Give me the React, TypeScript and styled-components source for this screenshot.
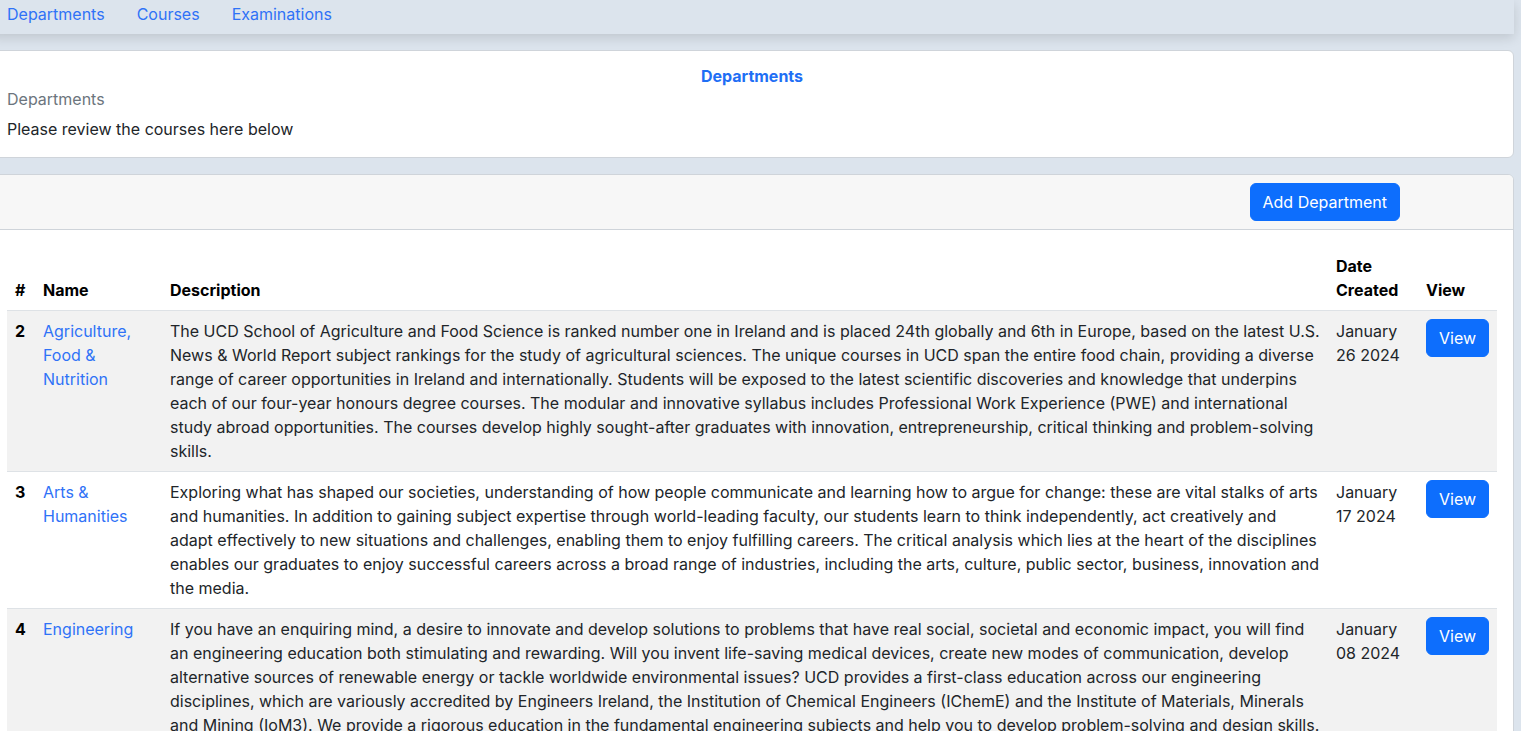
import React from "react";
import styled, { createGlobalStyle } from "styled-components";

const GlobalStyle = createGlobalStyle`
  html, body {
    margin: 0;
    padding: 0;
    background: #dce4ed;
    font-family: Inter, "Noto Sans", "Liberation Sans", sans-serif;
    font-size: 16px;
    line-height: 24px;
    color: #212529;
    overflow: hidden;
  }
  * { box-sizing: border-box; }
`;

const Page = styled.div`
  margin-left: -10px;
  width: 1524px;
  display: flex;
  flex-direction: column;
  gap: 16px;
`;

const NavBar = styled.nav`
  display: flex;
  gap: 32px;
  padding: 2px 17px 8px;
  background: #dce4ed;
  box-shadow: 0 4px 12px rgba(0, 0, 0, 0.13);
`;

const NavLink = styled.a`
  color: #2f72f7;
  text-decoration: none;
  font-size: 16px;
  line-height: 24px;
`;

const Card = styled.section`
  background: #fff;
  border: 1px solid #cfd4da;
  border-radius: 6px;
  overflow: hidden;
`;

const CardBody = styled.div`
  padding: 16px;
`;

const CardTitle = styled.h5`
  margin: 0 0 8px;
  font-size: 16px;
  font-weight: 700;
  line-height: 1.2;
  color: #1f6ff5;
  text-align: center;
`;

const CardSubtitle = styled.h6`
  margin: -4px 0 8px;
  font-size: 16px;
  font-weight: 400;
  line-height: 1.2;
  color: #6c757d;
`;

const CardText = styled.p`
  margin: 0;
`;

const CardHeader = styled.div`
  display: flex;
  justify-content: flex-end;
  padding: 8px 113px 8px 16px;
  background: #f7f7f7;
  border-bottom: 1px solid #cfd4da;
`;

const Button = styled.button`
  font-family: inherit;
  font-size: 16px;
  line-height: 24px;
  padding: 6px 12px;
  border: 1px solid #0d6efd;
  border-radius: 6px;
  background: #0d6efd;
  color: #fff;
  cursor: pointer;
`;

const Table = styled.table`
  width: 100%;
  border-collapse: collapse;
  table-layout: fixed;
`;

const HeadCell = styled.th`
  padding: 8px;
  text-align: left;
  vertical-align: bottom;
  font-weight: 700;
  color: #000;
  border-bottom: 1px solid #dee2e6;
`;

const Row = styled.tr<{ $striped: boolean }>`
  background: ${(p) => (p.$striped ? "#f2f2f2" : "#fff")};
  border-bottom: 1px solid #dee2e6;
`;

const NumCell = styled.th`
  padding: 8px;
  text-align: left;
  vertical-align: top;
  font-weight: 700;
  color: #000;
`;

const Cell = styled.td`
  padding: 8px;
  vertical-align: top;
`;

const NameLink = styled.a`
  color: #2f72f7;
  text-decoration: none;
`;

const rows = [
  {
    id: 2,
    name: "Agriculture, Food & Nutrition",
    desc: "The UCD School of Agriculture and Food Science is ranked number one in Ireland and is placed 24th globally and 6th in Europe, based on the latest U.S. News & World Report subject rankings for the study of agricultural sciences. The unique courses in UCD span the entire food chain, providing a diverse range of career opportunities in Ireland and internationally. Students will be exposed to the latest scientific discoveries and knowledge that underpins each of our four-year honours degree courses. The modular and innovative syllabus includes Professional Work Experience (PWE) and international study abroad opportunities. The courses develop highly sought-after graduates with innovation, entrepreneurship, critical thinking and problem-solving skills.",
    date: "January 26 2024",
  },
  {
    id: 3,
    name: "Arts & Humanities",
    desc: "Exploring what has shaped our societies, understanding of how people communicate and learning how to argue for change: these are vital stalks of arts and humanities. In addition to gaining subject expertise through world-leading faculty, our students learn to think independently, act creatively and adapt effectively to new situations and challenges, enabling them to enjoy fulfilling careers. The critical analysis which lies at the heart of the disciplines enables our graduates to enjoy successful careers across a broad range of industries, including the arts, culture, public sector, business, innovation and the media.",
    date: "January 17 2024",
  },
  {
    id: 4,
    name: "Engineering",
    desc: "If you have an enquiring mind, a desire to innovate and develop solutions to problems that have real social, societal and economic impact, you will find an engineering education both stimulating and rewarding. Will you invent life-saving medical devices, create new modes of communication, develop alternative sources of renewable energy or tackle worldwide environmental issues? UCD provides a first-class education across our engineering disciplines, which are variously accredited by Engineers Ireland, the Institution of Chemical Engineers (IChemE) and the Institute of Materials, Minerals and Mining (IoM3). We provide a rigorous education in the fundamental engineering subjects and help you to develop problem-solving and design skills. Our graduates go on to build successful careers in industry, research and public service across Ireland and around the world.",
    date: "January 08 2024",
  },
];

export default function App() {
  return (
    <>
      <GlobalStyle />
      <Page>
        <NavBar>
          <NavLink href="#">Departments</NavLink>
          <NavLink href="#">Courses</NavLink>
          <NavLink href="#">Examinations</NavLink>
        </NavBar>
        <Card>
          <CardBody>
            <CardTitle>Departments</CardTitle>
            <CardSubtitle>Departments</CardSubtitle>
            <CardText>Please review the courses here below</CardText>
          </CardBody>
        </Card>
        <Card>
          <CardHeader>
            <Button>Add Department</Button>
          </CardHeader>
          <CardBody>
            <Table>
              <colgroup>
                <col style={{ width: 28 }} />
                <col style={{ width: 127 }} />
                <col style={{ width: 1166 }} />
                <col style={{ width: 90 }} />
                <col style={{ width: 79 }} />
              </colgroup>
              <thead>
                <tr>
                  <HeadCell>#</HeadCell>
                  <HeadCell>Name</HeadCell>
                  <HeadCell>Description</HeadCell>
                  <HeadCell>Date Created</HeadCell>
                  <HeadCell>View</HeadCell>
                </tr>
              </thead>
              <tbody>
                {rows.map((r, i) => (
                  <Row key={r.id} $striped={i % 2 === 0}>
                    <NumCell>{r.id}</NumCell>
                    <Cell>
                      <NameLink href="#">{r.name}</NameLink>
                    </Cell>
                    <Cell>{r.desc}</Cell>
                    <Cell>{r.date}</Cell>
                    <Cell>
                      <Button>View</Button>
                    </Cell>
                  </Row>
                ))}
              </tbody>
            </Table>
          </CardBody>
        </Card>
      </Page>
    </>
  );
}
